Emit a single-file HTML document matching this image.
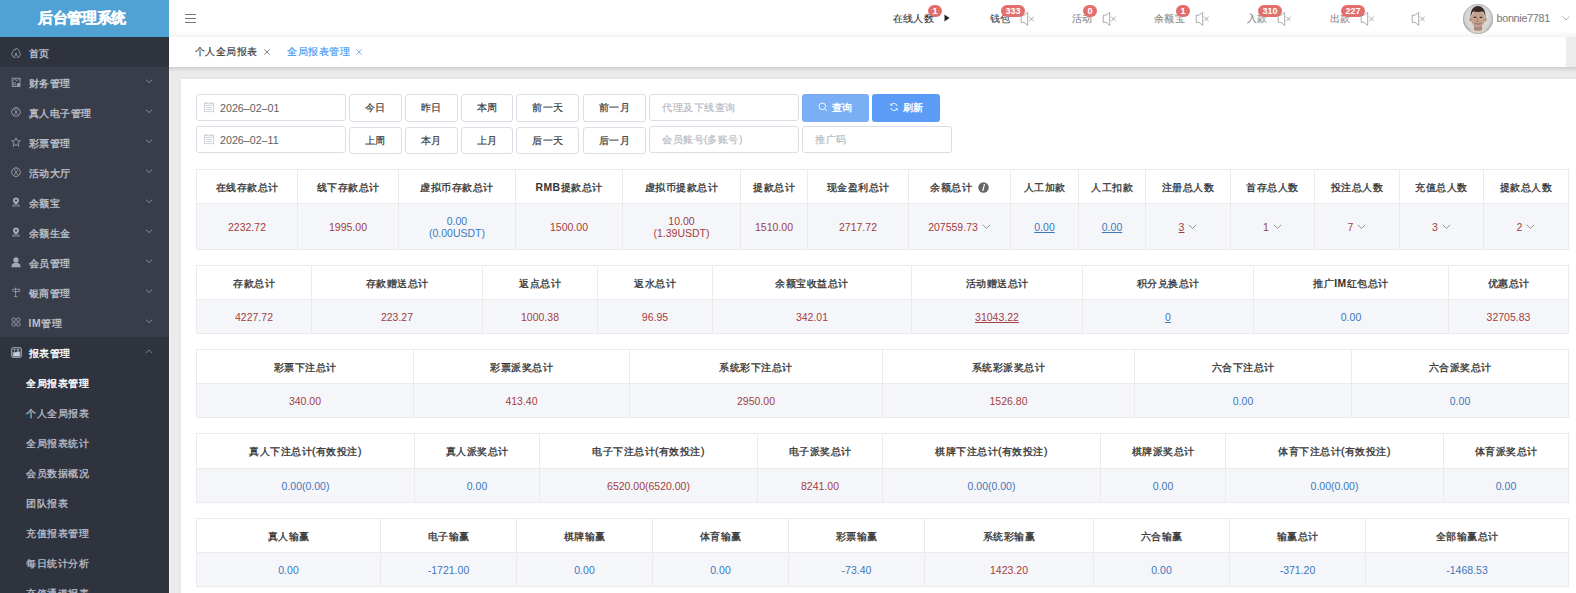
<!DOCTYPE html>
<html><head><meta charset="utf-8"><style>
*{box-sizing:border-box;margin:0;padding:0}
html,body{width:1576px;height:593px;overflow:hidden;background:#fff;font-family:"Liberation Sans",sans-serif;font-size:10.4px;letter-spacing:0.5px;color:#333}
.side{position:absolute;left:0;top:0;width:169px;height:593px;background:#383d49;overflow:hidden}
.logo{position:absolute;left:0;top:0;width:169px;height:36.7px;background:#50a1d4;color:#fff;font-size:15px;font-weight:bold;line-height:35px;text-align:center;padding-right:5px;letter-spacing:-0.3px;-webkit-text-stroke:0.3px #fff}
.mi{position:absolute;left:0;width:169px;height:30px;line-height:30px;color:#bcc0ca}
.mi.act{background:#2e333e}
.mi.sub{background:#2e333e}
.mic{position:absolute;left:11.3px;top:10px}
.mt{position:absolute;left:28.5px;top:1.5px;font-size:10.4px;letter-spacing:0.5px;-webkit-text-stroke:0.35px currentColor}
.mt b{-webkit-text-stroke:0}
.mt.wt{color:#fff}
.mchev{position:absolute;left:145px;top:11.5px}
.si{position:absolute;left:0;width:169px;height:30px;line-height:30px;background:#2e333e;color:#b9bdc7;padding-left:26px;padding-top:1.5px;font-size:10.4px;letter-spacing:0.5px;-webkit-text-stroke:0.3px currentColor}
.si.on{color:#fff;-webkit-text-stroke:0.4px #fff}
.header{position:absolute;left:169px;top:0;width:1407px;height:36.7px;background:#fff;z-index:2;background:linear-gradient(#fff 0,#fff 31px,#f5f5f5 36.7px)}
.hb{position:absolute;left:185px;width:11px;height:1px;background:#777}
.nt{position:absolute;top:12px;font-size:10.4px;letter-spacing:0.35px;-webkit-text-stroke:0.1px currentColor;line-height:14px;white-space:nowrap}
.badge{position:absolute;top:5px;height:12.3px;border-radius:7px;background:#e36f6d;color:#fff;font-size:9px;letter-spacing:0;font-weight:bold;line-height:12.5px;text-align:center}
.tabs{position:absolute;left:169px;top:36.7px;width:1407px;height:30.3px;background:#fff}
.tab{position:absolute;top:8px;line-height:14px;white-space:nowrap;-webkit-text-stroke:0.15px currentColor}
.gray{position:absolute;left:169px;top:67px;width:1407px;height:526px;background:#ebebeb;border-left:1px solid #f3f3f3}
.gshadow{position:absolute;left:169px;top:67px;width:1407px;height:5px;background:linear-gradient(#cfcfcf,rgba(235,235,235,0))}
.card{position:absolute;left:181px;top:78.6px;width:1400px;height:520px;background:#fff;box-shadow:0 0 3px rgba(0,0,20,0.08)}
.inp,.btn{position:absolute;height:27px;border:1px solid #dcdee5;border-radius:3px;background:#fff;line-height:25px;white-space:nowrap}
.btn{text-align:center;color:#3a3a3a;-webkit-text-stroke:0.2px currentColor}
.cal{position:absolute;left:6px;top:6px}
.dt{position:absolute;left:23px;top:0.5px;color:#5e5e5e;font-size:10.7px;letter-spacing:0}
.ph{position:absolute;left:12px;color:#b8bbc3;-webkit-text-stroke:0.2px currentColor}
.pbtn{position:absolute;height:28px;border-radius:3px;color:#fff;font-weight:bold;text-align:center;line-height:28px}
.hbg{position:absolute;background:#fff}
.dbg{position:absolute;background:#f5f6fa}
.hl{position:absolute;height:1px;background:#ebebeb}
.th{position:absolute;padding-top:1px;text-align:center;color:#333;white-space:nowrap;-webkit-text-stroke:0.3px #333}
.th b{-webkit-text-stroke:0}
.td{position:absolute;display:flex;align-items:center;justify-content:center;text-align:center;white-space:nowrap}
.vl{position:absolute;width:1px;background:#ebebeb}
.r{color:#a33d3d;font-size:10.5px;letter-spacing:0}
.b{color:#3b78ba;font-size:10.5px;letter-spacing:0}
.u{text-decoration:underline}
.two{line-height:12px}
.chev{margin-left:4px}
.info{display:inline-block;margin-left:6px;vertical-align:-1.5px}
</style></head><body>
<div class="header">
<div class="hb" style="left:16px;top:14px"></div><div class="hb" style="left:16px;top:18px"></div><div class="hb" style="left:16px;top:22px"></div>
</div>
<div style="position:absolute;left:0;top:0;width:1576px;height:37px;z-index:3"><div class="nt" style="left:892.5px;color:#333">在线人数</div><div class="badge" style="left:928px;width:14px">1</div><svg style="position:absolute;left:944px;top:14px" width="6" height="8" viewBox="0 0 6 8"><path d="M0.5 0.5 L5.5 4 L0.5 7.5 Z" fill="#222"/></svg><div class="nt" style="left:989.5px;color:#444">钱包</div><div class="badge" style="left:1001px;width:24px">333</div><div style="position:absolute;left:1019.8px;top:11px;line-height:0"><svg class="mute" width="16" height="16" viewBox="0 0 16 16"><path d="M1.2 4.2 H4 L7.7 1.3 V14.4 L4 11.3 H1.2 Z" fill="none" stroke="#8f8f8f" stroke-width="0.75" stroke-linejoin="round"/><path d="M9.3 5.6 L13.7 10.1 M13.7 5.6 L9.3 10.1" stroke="#8f8f8f" stroke-width="0.75"/></svg></div><div class="nt" style="left:1072px;color:#888">活动</div><div class="badge" style="left:1083px;width:14px">0</div><div style="position:absolute;left:1101.8px;top:11px;line-height:0"><svg class="mute" width="16" height="16" viewBox="0 0 16 16"><path d="M1.2 4.2 H4 L7.7 1.3 V14.4 L4 11.3 H1.2 Z" fill="none" stroke="#8f8f8f" stroke-width="0.75" stroke-linejoin="round"/><path d="M9.3 5.6 L13.7 10.1 M13.7 5.6 L9.3 10.1" stroke="#8f8f8f" stroke-width="0.75"/></svg></div><div class="nt" style="left:1154px;color:#888">余额宝</div><div class="badge" style="left:1176px;width:14px">1</div><div style="position:absolute;left:1194.8px;top:11px;line-height:0"><svg class="mute" width="16" height="16" viewBox="0 0 16 16"><path d="M1.2 4.2 H4 L7.7 1.3 V14.4 L4 11.3 H1.2 Z" fill="none" stroke="#8f8f8f" stroke-width="0.75" stroke-linejoin="round"/><path d="M9.3 5.6 L13.7 10.1 M13.7 5.6 L9.3 10.1" stroke="#8f8f8f" stroke-width="0.75"/></svg></div><div class="nt" style="left:1247px;color:#888">入款</div><div class="badge" style="left:1258px;width:24px">310</div><div style="position:absolute;left:1276.8px;top:11px;line-height:0"><svg class="mute" width="16" height="16" viewBox="0 0 16 16"><path d="M1.2 4.2 H4 L7.7 1.3 V14.4 L4 11.3 H1.2 Z" fill="none" stroke="#8f8f8f" stroke-width="0.75" stroke-linejoin="round"/><path d="M9.3 5.6 L13.7 10.1 M13.7 5.6 L9.3 10.1" stroke="#8f8f8f" stroke-width="0.75"/></svg></div><div class="nt" style="left:1329.5px;color:#888">出款</div><div class="badge" style="left:1341px;width:24px">227</div><div style="position:absolute;left:1359.8px;top:11px;line-height:0"><svg class="mute" width="16" height="16" viewBox="0 0 16 16"><path d="M1.2 4.2 H4 L7.7 1.3 V14.4 L4 11.3 H1.2 Z" fill="none" stroke="#8f8f8f" stroke-width="0.75" stroke-linejoin="round"/><path d="M9.3 5.6 L13.7 10.1 M13.7 5.6 L9.3 10.1" stroke="#8f8f8f" stroke-width="0.75"/></svg></div><div style="position:absolute;left:1410.8px;top:11px;line-height:0"><svg class="mute" width="16" height="16" viewBox="0 0 16 16"><path d="M1.2 4.2 H4 L7.7 1.3 V14.4 L4 11.3 H1.2 Z" fill="none" stroke="#8f8f8f" stroke-width="0.75" stroke-linejoin="round"/><path d="M9.3 5.6 L13.7 10.1 M13.7 5.6 L9.3 10.1" stroke="#8f8f8f" stroke-width="0.75"/></svg></div><svg style="position:absolute;left:1463px;top:4px" width="30" height="30" viewBox="0 0 30 30">
<defs><clipPath id="cc"><circle cx="15" cy="15" r="15"/></clipPath><radialGradient id="bg" cx="50%" cy="45%" r="55%"><stop offset="0" stop-color="#ececec"/><stop offset="0.8" stop-color="#d2d2d2"/><stop offset="1" stop-color="#a8a8a8"/></radialGradient></defs>
<g clip-path="url(#cc)"><rect width="30" height="30" fill="url(#bg)"/>
<path d="M2 30 C4 25.5 9 24.5 15 24.5 C21 24.5 26 25.5 28 30 Z" fill="#d9d2c5"/>
<path d="M11 20 H19 V26 C17 27 13 27 11 26 Z" fill="#a88a78"/>
<ellipse cx="7.8" cy="15.5" rx="1.3" ry="2" fill="#a9826a"/><ellipse cx="22.2" cy="15.5" rx="1.3" ry="2" fill="#a9826a"/>
<ellipse cx="15" cy="15" rx="7" ry="8.4" fill="#c3a28e"/>
<path d="M7.6 14 C7 6 10.5 2 15 2 C19.5 2 23 6 22.4 14 C21.8 10.5 21 8.3 19.5 7.6 C17 8.2 13 8.2 10.5 7.6 C9 8.3 8.2 10.5 7.6 14 Z" fill="#3a2a22"/>
<path d="M10.8 13.3 H13.3 M16.7 13.3 H19.2" stroke="#3a2a22" stroke-width="1.2"/>
<path d="M11.5 19 C13 21 17 21 18.5 19 C17 19.8 13 19.8 11.5 19 Z" fill="#f4eee8" stroke="#6e4c3c" stroke-width="0.5"/>
<path d="M14.6 14 L14 17.5 L15.6 17.6" fill="none" stroke="#8f6a56" stroke-width="0.6"/>
</g><circle cx="15" cy="15" r="14.7" fill="none" stroke="#9a9a9a" stroke-width="0.5"/></svg><div class="nt" style="left:1496.5px;top:11px;color:#808080;font-size:10.8px;letter-spacing:-0.3px">bonnie7781</div><svg style="position:absolute;left:1561.5px;top:15.5px" width="8" height="5" viewBox="0 0 8 5"><path d="M0.5 0.5 L4 4 L7.5 0.5" fill="none" stroke="#999" stroke-width="0.8"/></svg></div>
<div class="tabs">
<div class="tab" style="left:25.5px;color:#333">个人全局报表</div>
<svg style="position:absolute;left:95px;top:12.3px" width="6" height="6" viewBox="0 0 6 6"><path d="M0.3 0.3 L5.7 5.7 M5.7 0.3 L0.3 5.7" stroke="#666" stroke-width="0.8"/></svg>
<div class="tab" style="left:118px;color:#4196f5">全局报表管理</div>
<svg style="position:absolute;left:187.3px;top:12.3px" width="6" height="6" viewBox="0 0 6 6"><path d="M0.3 0.3 L5.7 5.7 M5.7 0.3 L0.3 5.7" stroke="#62a6f5" stroke-width="0.8"/></svg>
<div style="position:absolute;right:0;top:0;width:10px;height:30.3px;background:#ececec"></div>
</div>
<div class="gray"></div><div class="gshadow"></div>
<div class="card"></div>
<div class="inp" style="left:196px;top:94px;width:149.5px"><svg class="cal" width="12" height="12" viewBox="0 0 12 12"><rect x="1.4" y="2.2" width="9.4" height="8.5" fill="none" stroke="#c5c8cf" stroke-width="0.8"/><path d="M1.4 4.3 H10.8 M3.4 1 V3.2 M8.6 1 V3.2 M3.2 6.5 H8.9 M3.2 8.5 H8.9" stroke="#c5c8cf" stroke-width="0.8"/></svg><span class="dt">2026&#8211;02&#8211;01</span></div><div class="inp" style="left:196px;top:126px;width:149.5px"><svg class="cal" width="12" height="12" viewBox="0 0 12 12"><rect x="1.4" y="2.2" width="9.4" height="8.5" fill="none" stroke="#c5c8cf" stroke-width="0.8"/><path d="M1.4 4.3 H10.8 M3.4 1 V3.2 M8.6 1 V3.2 M3.2 6.5 H8.9 M3.2 8.5 H8.9" stroke="#c5c8cf" stroke-width="0.8"/></svg><span class="dt">2026&#8211;02&#8211;11</span></div><div class="btn" style="left:349px;top:94px;height:27.5px;width:52.69999999999999px">今日</div><div class="btn" style="left:405px;top:94px;height:27.5px;width:52.5px">昨日</div><div class="btn" style="left:460.8px;top:94px;height:27.5px;width:52.69999999999999px">本周</div><div class="btn" style="left:516.3px;top:94px;height:27.5px;width:63.10000000000002px">前一天</div><div class="btn" style="left:583px;top:94px;height:27.5px;width:62.700000000000045px">前一月</div><div class="btn" style="left:349px;top:126.8px;width:52.69999999999999px">上周</div><div class="btn" style="left:405px;top:126.8px;width:52.5px">本月</div><div class="btn" style="left:460.8px;top:126.8px;width:52.69999999999999px">上月</div><div class="btn" style="left:516.3px;top:126.8px;width:63.10000000000002px">后一天</div><div class="btn" style="left:583px;top:126.8px;width:62.700000000000045px">后一月</div><div class="inp" style="left:649px;top:94px;width:149.70000000000005px"><span class="ph">代理及下线查询</span></div><div class="inp" style="left:649px;top:126px;width:149.70000000000005px"><span class="ph">会员账号<span style="letter-spacing:0">(</span>多账号<span style="letter-spacing:0">)</span></span></div><div class="inp" style="left:802px;top:126px;width:149.60000000000002px"><span class="ph">推广码</span></div><div class="pbtn" style="left:802px;top:94px;width:66.8px;background:#7aaef5"><svg width="10" height="10" viewBox="0 0 10 10" style="margin-right:4px;vertical-align:-1px"><circle cx="4.3" cy="4.3" r="3.3" fill="none" stroke="#fff" stroke-width="0.9"/><path d="M6.7 6.7 L9 9" stroke="#fff" stroke-width="0.9"/></svg>查询</div><div class="pbtn" style="left:872px;top:94px;width:68px;background:#5c9cf6"><svg width="10" height="10" viewBox="0 0 10 10" style="margin-right:4px;vertical-align:-1px"><path d="M8.3 4 A3.5 3.5 0 0 0 2 3 M1.7 6 A3.5 3.5 0 0 0 8 7" fill="none" stroke="#fff" stroke-width="0.9"/><path d="M1.6 1.5 L1.8 3.4 L3.6 3.2 M8.4 8.5 L8.2 6.6 L6.4 6.8" fill="none" stroke="#fff" stroke-width="0.8"/></svg>刷新</div>
<div class="hbg" style="left:196px;top:169px;width:1372px;height:34px"></div>
<div class="dbg" style="left:196px;top:203px;width:1372px;height:46px"></div>
<div class="hl" style="left:196px;top:169px;width:1372px"></div>
<div class="hl" style="left:196px;top:203px;width:1372px"></div>
<div class="hl" style="left:196px;top:249px;width:1372px"></div>
<div class="vl" style="left:196px;top:169px;height:81px"></div>
<div class="vl" style="left:297px;top:169px;height:81px"></div>
<div class="vl" style="left:398px;top:169px;height:81px"></div>
<div class="vl" style="left:515px;top:169px;height:81px"></div>
<div class="vl" style="left:622px;top:169px;height:81px"></div>
<div class="vl" style="left:740px;top:169px;height:81px"></div>
<div class="vl" style="left:807px;top:169px;height:81px"></div>
<div class="vl" style="left:908px;top:169px;height:81px"></div>
<div class="vl" style="left:1010px;top:169px;height:81px"></div>
<div class="vl" style="left:1078px;top:169px;height:81px"></div>
<div class="vl" style="left:1145px;top:169px;height:81px"></div>
<div class="vl" style="left:1230px;top:169px;height:81px"></div>
<div class="vl" style="left:1314px;top:169px;height:81px"></div>
<div class="vl" style="left:1399px;top:169px;height:81px"></div>
<div class="vl" style="left:1483px;top:169px;height:81px"></div>
<div class="vl" style="left:1568px;top:169px;height:81px"></div>
<div class="th" style="left:197px;top:170px;width:100px;height:33px;line-height:33px">在线存款总计</div>
<div class="td" style="left:197px;top:204px;width:100px;height:45px"><span class="r">2232.72</span></div>
<div class="th" style="left:298px;top:170px;width:100px;height:33px;line-height:33px">线下存款总计</div>
<div class="td" style="left:298px;top:204px;width:100px;height:45px"><span class="r">1995.00</span></div>
<div class="th" style="left:399px;top:170px;width:116px;height:33px;line-height:33px">虚拟币存款总计</div>
<div class="td" style="left:399px;top:204px;width:116px;height:45px"><span class="b two">0.00<br>(0.00USDT)</span></div>
<div class="th" style="left:516px;top:170px;width:106px;height:33px;line-height:33px"><b>RMB</b>提款总计</div>
<div class="td" style="left:516px;top:204px;width:106px;height:45px"><span class="r">1500.00</span></div>
<div class="th" style="left:623px;top:170px;width:117px;height:33px;line-height:33px">虚拟币提款总计</div>
<div class="td" style="left:623px;top:204px;width:117px;height:45px"><span class="r two">10.00<br>(1.39USDT)</span></div>
<div class="th" style="left:741px;top:170px;width:66px;height:33px;line-height:33px">提款总计</div>
<div class="td" style="left:741px;top:204px;width:66px;height:45px"><span class="r">1510.00</span></div>
<div class="th" style="left:808px;top:170px;width:100px;height:33px;line-height:33px">现金盈利总计</div>
<div class="td" style="left:808px;top:204px;width:100px;height:45px"><span class="r">2717.72</span></div>
<div class="th" style="left:909px;top:170px;width:101px;height:33px;line-height:33px">余额总计<svg class="info" width="11" height="11" viewBox="0 0 11 11"><circle cx="5.5" cy="5.5" r="5.2" fill="#666"/><circle cx="6.3" cy="2.9" r="0.85" fill="#fff"/><path d="M5.9 4.6 L4.9 8.4" stroke="#fff" stroke-width="1.3" stroke-linecap="round"/></svg></div>
<div class="td" style="left:909px;top:204px;width:101px;height:45px"><span class="r">207559.73</span><svg class="chev" width="9" height="6" viewBox="0 0 9 6"><path d="M0.8 0.8 L4.5 4.4 L8.2 0.8" fill="none" stroke="#888" stroke-width="0.9"/></svg></div>
<div class="th" style="left:1011px;top:170px;width:67px;height:33px;line-height:33px">人工加款</div>
<div class="td" style="left:1011px;top:204px;width:67px;height:45px"><span class="b u">0.00</span></div>
<div class="th" style="left:1079px;top:170px;width:66px;height:33px;line-height:33px">人工扣款</div>
<div class="td" style="left:1079px;top:204px;width:66px;height:45px"><span class="b u">0.00</span></div>
<div class="th" style="left:1146px;top:170px;width:84px;height:33px;line-height:33px">注册总人数</div>
<div class="td" style="left:1146px;top:204px;width:84px;height:45px"><span class="r u">3</span><svg class="chev" width="9" height="6" viewBox="0 0 9 6"><path d="M0.8 0.8 L4.5 4.4 L8.2 0.8" fill="none" stroke="#888" stroke-width="0.9"/></svg></div>
<div class="th" style="left:1231px;top:170px;width:83px;height:33px;line-height:33px">首存总人数</div>
<div class="td" style="left:1231px;top:204px;width:83px;height:45px"><span class="r">1</span><svg class="chev" width="9" height="6" viewBox="0 0 9 6"><path d="M0.8 0.8 L4.5 4.4 L8.2 0.8" fill="none" stroke="#888" stroke-width="0.9"/></svg></div>
<div class="th" style="left:1315px;top:170px;width:84px;height:33px;line-height:33px">投注总人数</div>
<div class="td" style="left:1315px;top:204px;width:84px;height:45px"><span class="r">7</span><svg class="chev" width="9" height="6" viewBox="0 0 9 6"><path d="M0.8 0.8 L4.5 4.4 L8.2 0.8" fill="none" stroke="#888" stroke-width="0.9"/></svg></div>
<div class="th" style="left:1400px;top:170px;width:83px;height:33px;line-height:33px">充值总人数</div>
<div class="td" style="left:1400px;top:204px;width:83px;height:45px"><span class="r">3</span><svg class="chev" width="9" height="6" viewBox="0 0 9 6"><path d="M0.8 0.8 L4.5 4.4 L8.2 0.8" fill="none" stroke="#888" stroke-width="0.9"/></svg></div>
<div class="th" style="left:1484px;top:170px;width:84px;height:33px;line-height:33px">提款总人数</div>
<div class="td" style="left:1484px;top:204px;width:84px;height:45px"><span class="r">2</span><svg class="chev" width="9" height="6" viewBox="0 0 9 6"><path d="M0.8 0.8 L4.5 4.4 L8.2 0.8" fill="none" stroke="#888" stroke-width="0.9"/></svg></div><div class="hbg" style="left:196px;top:265px;width:1372px;height:34px"></div>
<div class="dbg" style="left:196px;top:299px;width:1372px;height:34px"></div>
<div class="hl" style="left:196px;top:265px;width:1372px"></div>
<div class="hl" style="left:196px;top:299px;width:1372px"></div>
<div class="hl" style="left:196px;top:333px;width:1372px"></div>
<div class="vl" style="left:196px;top:265px;height:69px"></div>
<div class="vl" style="left:311px;top:265px;height:69px"></div>
<div class="vl" style="left:482px;top:265px;height:69px"></div>
<div class="vl" style="left:597px;top:265px;height:69px"></div>
<div class="vl" style="left:712px;top:265px;height:69px"></div>
<div class="vl" style="left:911px;top:265px;height:69px"></div>
<div class="vl" style="left:1082px;top:265px;height:69px"></div>
<div class="vl" style="left:1253px;top:265px;height:69px"></div>
<div class="vl" style="left:1448px;top:265px;height:69px"></div>
<div class="vl" style="left:1568px;top:265px;height:69px"></div>
<div class="th" style="left:197px;top:266px;width:114px;height:33px;line-height:33px">存款总计</div>
<div class="td" style="left:197px;top:300px;width:114px;height:33px"><span class="r">4227.72</span></div>
<div class="th" style="left:312px;top:266px;width:170px;height:33px;line-height:33px">存款赠送总计</div>
<div class="td" style="left:312px;top:300px;width:170px;height:33px"><span class="r">223.27</span></div>
<div class="th" style="left:483px;top:266px;width:114px;height:33px;line-height:33px">返点总计</div>
<div class="td" style="left:483px;top:300px;width:114px;height:33px"><span class="r">1000.38</span></div>
<div class="th" style="left:598px;top:266px;width:114px;height:33px;line-height:33px">返水总计</div>
<div class="td" style="left:598px;top:300px;width:114px;height:33px"><span class="r">96.95</span></div>
<div class="th" style="left:713px;top:266px;width:198px;height:33px;line-height:33px">余额宝收益总计</div>
<div class="td" style="left:713px;top:300px;width:198px;height:33px"><span class="r">342.01</span></div>
<div class="th" style="left:912px;top:266px;width:170px;height:33px;line-height:33px">活动赠送总计</div>
<div class="td" style="left:912px;top:300px;width:170px;height:33px"><span class="r u">31043.22</span></div>
<div class="th" style="left:1083px;top:266px;width:170px;height:33px;line-height:33px">积分兑换总计</div>
<div class="td" style="left:1083px;top:300px;width:170px;height:33px"><span class="b u">0</span></div>
<div class="th" style="left:1254px;top:266px;width:194px;height:33px;line-height:33px">推广<b>IM</b>红包总计</div>
<div class="td" style="left:1254px;top:300px;width:194px;height:33px"><span class="b">0.00</span></div>
<div class="th" style="left:1449px;top:266px;width:119px;height:33px;line-height:33px">优惠总计</div>
<div class="td" style="left:1449px;top:300px;width:119px;height:33px"><span class="r">32705.83</span></div><div class="hbg" style="left:196px;top:349px;width:1372px;height:34px"></div>
<div class="dbg" style="left:196px;top:383px;width:1372px;height:34px"></div>
<div class="hl" style="left:196px;top:349px;width:1372px"></div>
<div class="hl" style="left:196px;top:383px;width:1372px"></div>
<div class="hl" style="left:196px;top:417px;width:1372px"></div>
<div class="vl" style="left:196px;top:349px;height:69px"></div>
<div class="vl" style="left:413px;top:349px;height:69px"></div>
<div class="vl" style="left:629px;top:349px;height:69px"></div>
<div class="vl" style="left:882px;top:349px;height:69px"></div>
<div class="vl" style="left:1134px;top:349px;height:69px"></div>
<div class="vl" style="left:1351px;top:349px;height:69px"></div>
<div class="vl" style="left:1568px;top:349px;height:69px"></div>
<div class="th" style="left:197px;top:350px;width:216px;height:33px;line-height:33px">彩票下注总计</div>
<div class="td" style="left:197px;top:384px;width:216px;height:33px"><span class="r">340.00</span></div>
<div class="th" style="left:414px;top:350px;width:215px;height:33px;line-height:33px">彩票派奖总计</div>
<div class="td" style="left:414px;top:384px;width:215px;height:33px"><span class="r">413.40</span></div>
<div class="th" style="left:630px;top:350px;width:252px;height:33px;line-height:33px">系统彩下注总计</div>
<div class="td" style="left:630px;top:384px;width:252px;height:33px"><span class="r">2950.00</span></div>
<div class="th" style="left:883px;top:350px;width:251px;height:33px;line-height:33px">系统彩派奖总计</div>
<div class="td" style="left:883px;top:384px;width:251px;height:33px"><span class="r">1526.80</span></div>
<div class="th" style="left:1135px;top:350px;width:216px;height:33px;line-height:33px">六合下注总计</div>
<div class="td" style="left:1135px;top:384px;width:216px;height:33px"><span class="b">0.00</span></div>
<div class="th" style="left:1352px;top:350px;width:216px;height:33px;line-height:33px">六合派奖总计</div>
<div class="td" style="left:1352px;top:384px;width:216px;height:33px"><span class="b">0.00</span></div><div class="hbg" style="left:196px;top:433px;width:1372px;height:35px"></div>
<div class="dbg" style="left:196px;top:468px;width:1372px;height:34px"></div>
<div class="hl" style="left:196px;top:433px;width:1372px"></div>
<div class="hl" style="left:196px;top:468px;width:1372px"></div>
<div class="hl" style="left:196px;top:502px;width:1372px"></div>
<div class="vl" style="left:196px;top:433px;height:70px"></div>
<div class="vl" style="left:414px;top:433px;height:70px"></div>
<div class="vl" style="left:539px;top:433px;height:70px"></div>
<div class="vl" style="left:757px;top:433px;height:70px"></div>
<div class="vl" style="left:882px;top:433px;height:70px"></div>
<div class="vl" style="left:1100px;top:433px;height:70px"></div>
<div class="vl" style="left:1225px;top:433px;height:70px"></div>
<div class="vl" style="left:1443px;top:433px;height:70px"></div>
<div class="vl" style="left:1568px;top:433px;height:70px"></div>
<div class="th" style="left:197px;top:434px;width:217px;height:34px;line-height:34px">真人下注总计(有效投注)</div>
<div class="td" style="left:197px;top:469px;width:217px;height:33px"><span class="b">0.00(0.00)</span></div>
<div class="th" style="left:415px;top:434px;width:124px;height:34px;line-height:34px">真人派奖总计</div>
<div class="td" style="left:415px;top:469px;width:124px;height:33px"><span class="b">0.00</span></div>
<div class="th" style="left:540px;top:434px;width:217px;height:34px;line-height:34px">电子下注总计(有效投注)</div>
<div class="td" style="left:540px;top:469px;width:217px;height:33px"><span class="r">6520.00(6520.00)</span></div>
<div class="th" style="left:758px;top:434px;width:124px;height:34px;line-height:34px">电子派奖总计</div>
<div class="td" style="left:758px;top:469px;width:124px;height:33px"><span class="r">8241.00</span></div>
<div class="th" style="left:883px;top:434px;width:217px;height:34px;line-height:34px">棋牌下注总计(有效投注)</div>
<div class="td" style="left:883px;top:469px;width:217px;height:33px"><span class="b">0.00(0.00)</span></div>
<div class="th" style="left:1101px;top:434px;width:124px;height:34px;line-height:34px">棋牌派奖总计</div>
<div class="td" style="left:1101px;top:469px;width:124px;height:33px"><span class="b">0.00</span></div>
<div class="th" style="left:1226px;top:434px;width:217px;height:34px;line-height:34px">体育下注总计(有效投注)</div>
<div class="td" style="left:1226px;top:469px;width:217px;height:33px"><span class="b">0.00(0.00)</span></div>
<div class="th" style="left:1444px;top:434px;width:124px;height:34px;line-height:34px">体育派奖总计</div>
<div class="td" style="left:1444px;top:469px;width:124px;height:33px"><span class="b">0.00</span></div><div class="hbg" style="left:196px;top:518px;width:1372px;height:34px"></div>
<div class="dbg" style="left:196px;top:552px;width:1372px;height:34px"></div>
<div class="hl" style="left:196px;top:518px;width:1372px"></div>
<div class="hl" style="left:196px;top:552px;width:1372px"></div>
<div class="hl" style="left:196px;top:586px;width:1372px"></div>
<div class="vl" style="left:196px;top:518px;height:69px"></div>
<div class="vl" style="left:380px;top:518px;height:69px"></div>
<div class="vl" style="left:516px;top:518px;height:69px"></div>
<div class="vl" style="left:652px;top:518px;height:69px"></div>
<div class="vl" style="left:788px;top:518px;height:69px"></div>
<div class="vl" style="left:924px;top:518px;height:69px"></div>
<div class="vl" style="left:1093px;top:518px;height:69px"></div>
<div class="vl" style="left:1229px;top:518px;height:69px"></div>
<div class="vl" style="left:1365px;top:518px;height:69px"></div>
<div class="vl" style="left:1568px;top:518px;height:69px"></div>
<div class="th" style="left:197px;top:519px;width:183px;height:33px;line-height:33px">真人输赢</div>
<div class="td" style="left:197px;top:553px;width:183px;height:33px"><span class="b">0.00</span></div>
<div class="th" style="left:381px;top:519px;width:135px;height:33px;line-height:33px">电子输赢</div>
<div class="td" style="left:381px;top:553px;width:135px;height:33px"><span class="b">-1721.00</span></div>
<div class="th" style="left:517px;top:519px;width:135px;height:33px;line-height:33px">棋牌输赢</div>
<div class="td" style="left:517px;top:553px;width:135px;height:33px"><span class="b">0.00</span></div>
<div class="th" style="left:653px;top:519px;width:135px;height:33px;line-height:33px">体育输赢</div>
<div class="td" style="left:653px;top:553px;width:135px;height:33px"><span class="b">0.00</span></div>
<div class="th" style="left:789px;top:519px;width:135px;height:33px;line-height:33px">彩票输赢</div>
<div class="td" style="left:789px;top:553px;width:135px;height:33px"><span class="b">-73.40</span></div>
<div class="th" style="left:925px;top:519px;width:168px;height:33px;line-height:33px">系统彩输赢</div>
<div class="td" style="left:925px;top:553px;width:168px;height:33px"><span class="r">1423.20</span></div>
<div class="th" style="left:1094px;top:519px;width:135px;height:33px;line-height:33px">六合输赢</div>
<div class="td" style="left:1094px;top:553px;width:135px;height:33px"><span class="b">0.00</span></div>
<div class="th" style="left:1230px;top:519px;width:135px;height:33px;line-height:33px">输赢总计</div>
<div class="td" style="left:1230px;top:553px;width:135px;height:33px"><span class="b">-371.20</span></div>
<div class="th" style="left:1366px;top:519px;width:202px;height:33px;line-height:33px">全部输赢总计</div>
<div class="td" style="left:1366px;top:553px;width:202px;height:33px"><span class="b">-1468.53</span></div>
<div class="side">
<div class="logo">后台管理系统</div>
<div class="mi act" style="top:37px"><svg class="mic" width="11" height="11" viewBox="0 0 11 11"><path d="M1.6 4.6 L3.3 2.4 L4.2 3.1 L5.6 1 L8.4 4.4 A4.2 4.2 0 1 1 1.6 4.6 Z" fill="none" stroke="#a3aabb" stroke-width="0.8" stroke-linejoin="round"/><path d="M3.6 9.6 L5 6 L6.4 9.6" fill="none" stroke="#a3aabb" stroke-width="0.8"/></svg><span class="mt">首页</span></div><div class="mi" style="top:67px"><svg class="mic" width="11" height="11" viewBox="0 0 11 11"><rect x="1.2" y="1.2" width="7.8" height="8.2" fill="none" stroke="#a3aabb" stroke-width="0.8"/><path d="M2.6 5 V8.6 M4.2 5 V8.6 M2.6 3.2 L4.2 2.4 L6 3.6 L7.6 2.4" fill="none" stroke="#a3aabb" stroke-width="0.7"/><circle cx="7.4" cy="7.6" r="1.6" fill="#a3aabb"/></svg><span class="mt">财务管理</span><svg class="mchev" width="8" height="5" viewBox="0 0 8 5"><path d="M1 0.8 L4 3.6 L7 0.8" fill="none" stroke="#8f949e" stroke-width="0.9"/></svg></div><div class="mi" style="top:97px"><svg class="mic" width="11" height="11" viewBox="0 0 11 11"><circle cx="5" cy="5" r="4.3" fill="none" stroke="#a3aabb" stroke-width="0.8"/><path d="M3 2 L7.2 8.4 M7 2.4 L2.8 8.4 M4 1.2 H6" fill="none" stroke="#a3aabb" stroke-width="0.7"/></svg><span class="mt">真人电子管理</span><svg class="mchev" width="8" height="5" viewBox="0 0 8 5"><path d="M1 0.8 L4 3.6 L7 0.8" fill="none" stroke="#8f949e" stroke-width="0.9"/></svg></div><div class="mi" style="top:127px"><svg class="mic" width="11" height="11" viewBox="0 0 11 11"><path d="M5 0.8 L6.3 3.7 L9.4 3.9 L7 6 L7.8 9.2 L5 7.5 L2.2 9.2 L3 6 L0.6 3.9 L3.7 3.7 Z" fill="none" stroke="#a3aabb" stroke-width="0.8" stroke-linejoin="round"/></svg><span class="mt">彩票管理</span><svg class="mchev" width="8" height="5" viewBox="0 0 8 5"><path d="M1 0.8 L4 3.6 L7 0.8" fill="none" stroke="#8f949e" stroke-width="0.9"/></svg></div><div class="mi" style="top:157px"><svg class="mic" width="11" height="11" viewBox="0 0 11 11"><circle cx="5" cy="5.2" r="4.3" fill="none" stroke="#a3aabb" stroke-width="0.8"/><path d="M3 2.2 L7.2 8.6 M7 2.6 L2.8 8.6 M4 1 H6" fill="none" stroke="#a3aabb" stroke-width="0.7"/></svg><span class="mt">活动大厅</span><svg class="mchev" width="8" height="5" viewBox="0 0 8 5"><path d="M1 0.8 L4 3.6 L7 0.8" fill="none" stroke="#8f949e" stroke-width="0.9"/></svg></div><div class="mi" style="top:187px"><svg class="mic" width="11" height="11" viewBox="0 0 11 11"><path d="M5 0.6 C6.8 0.6 8 1.9 8 3.6 C8 5.3 6.3 6.8 5 8.2 C3.7 6.8 2 5.3 2 3.6 C2 1.9 3.2 0.6 5 0.6 Z" fill="#a3aabb"/><circle cx="5" cy="3.5" r="1.1" fill="#383d49"/><path d="M1.2 9 C2 8 3 7.9 3.6 7.9 M6.4 7.9 C7 7.9 8 8 8.8 9 M1.2 9 H8.8" fill="none" stroke="#a3aabb" stroke-width="0.7"/></svg><span class="mt">余额宝</span><svg class="mchev" width="8" height="5" viewBox="0 0 8 5"><path d="M1 0.8 L4 3.6 L7 0.8" fill="none" stroke="#8f949e" stroke-width="0.9"/></svg></div><div class="mi" style="top:217px"><svg class="mic" width="11" height="11" viewBox="0 0 11 11"><path d="M5 0.6 C6.8 0.6 8 1.9 8 3.6 C8 5.3 6.3 6.8 5 8.2 C3.7 6.8 2 5.3 2 3.6 C2 1.9 3.2 0.6 5 0.6 Z" fill="#a3aabb"/><circle cx="5" cy="3.5" r="1.1" fill="#383d49"/><path d="M1.2 9 C2 8 3 7.9 3.6 7.9 M6.4 7.9 C7 7.9 8 8 8.8 9 M1.2 9 H8.8" fill="none" stroke="#a3aabb" stroke-width="0.7"/></svg><span class="mt">余额生金</span><svg class="mchev" width="8" height="5" viewBox="0 0 8 5"><path d="M1 0.8 L4 3.6 L7 0.8" fill="none" stroke="#8f949e" stroke-width="0.9"/></svg></div><div class="mi" style="top:247px"><svg class="mic" width="11" height="11" viewBox="0 0 11 11"><circle cx="5" cy="2.9" r="2.6" fill="#a3aabb"/><path d="M0.4 10.2 C0.4 7 2.4 5.8 5 5.8 C7.6 5.8 9.6 7 9.6 10.2 Z" fill="#a3aabb"/></svg><span class="mt">会员管理</span><svg class="mchev" width="8" height="5" viewBox="0 0 8 5"><path d="M1 0.8 L4 3.6 L7 0.8" fill="none" stroke="#8f949e" stroke-width="0.9"/></svg></div><div class="mi" style="top:277px"><svg class="mic" width="11" height="11" viewBox="0 0 11 11"><path d="M4.6 0.6 V9.6 M2.8 9.6 H6.6 M1 3.3 L2.2 2.2 H8.6 V4.6 H2.2 Z" fill="none" stroke="#a3aabb" stroke-width="0.75" stroke-linejoin="round"/></svg><span class="mt">银商管理</span><svg class="mchev" width="8" height="5" viewBox="0 0 8 5"><path d="M1 0.8 L4 3.6 L7 0.8" fill="none" stroke="#8f949e" stroke-width="0.9"/></svg></div><div class="mi" style="top:307px"><svg class="mic" width="11" height="11" viewBox="0 0 11 11"><rect x="1" y="1" width="3.4" height="3.4" rx="1.3" fill="none" stroke="#a3aabb" stroke-width="0.8"/><rect x="5.6" y="1" width="3.4" height="3.4" rx="1.3" fill="none" stroke="#a3aabb" stroke-width="0.8"/><rect x="1" y="5.6" width="3.4" height="3.4" rx="1.3" fill="none" stroke="#a3aabb" stroke-width="0.8"/><rect x="5.6" y="5.6" width="3.4" height="3.4" rx="1.3" fill="none" stroke="#a3aabb" stroke-width="0.8"/></svg><span class="mt"><b>IM</b>管理</span><svg class="mchev" width="8" height="5" viewBox="0 0 8 5"><path d="M1 0.8 L4 3.6 L7 0.8" fill="none" stroke="#8f949e" stroke-width="0.9"/></svg></div><div class="mi sub" style="top:337px"><svg class="mic" width="11" height="11" viewBox="0 0 11 11"><rect x="0.6" y="0.6" width="9.8" height="9.8" rx="1.6" fill="#5f6573" stroke="#a3aabb" stroke-width="0.9"/><rect x="1.6" y="1.6" width="7.8" height="3.8" fill="#2e333e"/><path d="M2.2 5.3 H5.2 L6 4.6 H8.8 V9.2 H2.2 Z" fill="#c8ccd6"/><path d="M2.4 2.6 H4.6 M3.5 2.6 V4.6 M5.8 2.6 H8.4 M5.8 3.8 H8" stroke="#b8bdc8" stroke-width="0.8"/></svg><span class="mt wt">报表管理</span><svg class="mchev" width="8" height="5" viewBox="0 0 8 5"><path d="M0.7 4.3 L4 1 L7.3 4.3" fill="none" stroke="#8a8f99" stroke-width="0.8"/></svg></div><div class="si on" style="top:367px">全局报表管理</div><div class="si" style="top:397px">个人全局报表</div><div class="si" style="top:427px">全局报表统计</div><div class="si" style="top:457px">会员数据概况</div><div class="si" style="top:487px">团队报表</div><div class="si" style="top:517px">充值报表管理</div><div class="si" style="top:547px">每日统计分析</div><div class="si" style="top:577px">充值通道报表</div>
</div>
</body></html>
